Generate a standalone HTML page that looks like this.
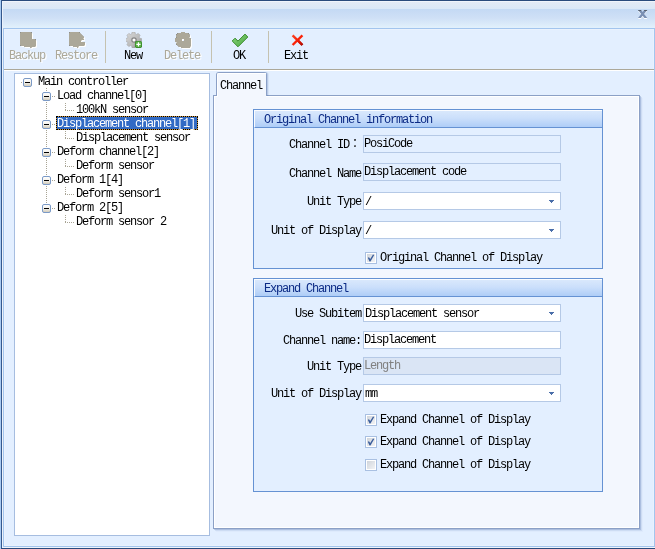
<!DOCTYPE html>
<html lang="en"><head><meta charset="utf-8"><title>Channel</title>
<style>
html,body{margin:0;padding:0}
body{width:655px;height:549px;position:relative;overflow:hidden;background:#e3efff;font:12px/12px "Liberation Mono","Noto Sans CJK SC",monospace;color:#000}
div,span,svg{position:absolute;box-sizing:border-box}
.t{white-space:pre;font:12px/12px "Liberation Mono","Noto Sans CJK SC",monospace;letter-spacing:-1.2px;will-change:transform}
.dis{color:#aca899;text-shadow:1.2px 1px 0 #fff}
.hd{color:#0b2a85}
.wh{color:#fff}
.gr{color:#808080}
.inp{border:1px solid #b5c9e6;height:18px;left:363px;width:198px}
.w{background:#fff}
.ro{background:#e3efff}
.dd{background:#dae5f5}
.grp{border:1px solid #6592d3;background:#e3efff;left:253px;width:350px}
.gh{left:0;top:0;width:348px;height:18px;border-bottom:1px solid #6592d3;border-top:1px solid #fafcff;border-left:1px solid #fafcff;background:linear-gradient(#d9e8fc,#cbdffb 45%,#aecdf7)}
.cb{width:12px;height:12px;border:1px solid #a9c0e2;background:#fff;left:365px}
.cb i{position:absolute;left:1px;top:1px;width:8px;height:8px;background:linear-gradient(135deg,#cfd4db,#f2f3f5)}
.sep{width:1px;top:31px;height:32px;background:#c5c2b0}
</style></head><body>

<div style="left:1px;top:0;width:654px;height:29px;background:linear-gradient(#2a4a7c 0,#2a4a7c 1px,#f0f4fb 1px,#f0f4fb 2px,#e3eaf5 2px,#dae7f7 9px,#c4d9f4 9px,#cfe0f6 18px,#e2f1fc 28px,#a3c5ee 28px)"></div>
<div style="left:0;top:0;width:1px;height:549px;background:#a8caf2"></div>
<div style="left:1px;top:0;width:1px;height:549px;background:#34578c"></div>
<div style="left:2px;top:1px;width:1px;height:547px;background:#ecf2fb"></div>
<div style="left:1px;top:548px;width:654px;height:1px;background:#2a4a7c"></div>
<div style="left:2px;top:547px;width:653px;height:1px;background:#eef4fc"></div>
<div style="left:3px;top:28px;width:652px;height:519px;border:1px solid #a3c5ee;background:#e3efff"></div>
<div style="left:4px;top:29px;width:650px;height:517px;border:1px solid #eaf2fd"></div>
<svg style="left:636px;top:8px" width="14" height="13" viewBox="0 0 14 13"><path d="M2 3h2.900l1.750 2.100 1.750-2.100h2.900l-3.200 3.800 3.200 4.200h-2.900l-1.750-2.400-1.750 2.400h-2.900l3.200-4.200z" fill="#fff"/><path d="M2 2h2.900l1.750 2.100 1.750-2.100h2.900l-3.200 3.900 3.200 4.100h-2.900l-1.750-2.300-1.750 2.300h-2.900l3.200-4.100z" fill="#7a8fb3"/><path d="M2 2h2.900l.7.900h-2.900zM8.400 2h2.900l-.7.900h-2.900z" fill="#59616e"/></svg>
<div style="left:4px;top:69px;width:650px;height:1px;background:#aca899"></div>
<div style="left:4px;top:70px;width:650px;height:1px;background:#fff"></div>
<div class="sep" style="left:105px"></div><div class="sep" style="left:211px"></div><div class="sep" style="left:268px"></div>
<svg style="left:19px;top:31px" width="20" height="19" viewBox="0 0 20 19"><g id="bk"><path d="M2 1h10l1 1v6h3l1 1v6l-1 1h-3l-.5 1h-1.500v-1h-6v-1h-3l-1-1v-12z"/></g><use href="#bk" fill="#fff" x="1" y="1"/><use href="#bk" fill="#aca899"/></svg>
<svg style="left:68px;top:31px" width="20" height="19" viewBox="0 0 20 19"><g id="rs"><path d="M2 1h9l5 5v1h-1l1 1v1h-2l-1 1v1h4v3l-1 1h-5l-.5 1-.5 1h-1v-1h-4v-1h-3l-1-1v-12z"/></g><use href="#rs" fill="#fff" x="1" y="1"/><use href="#rs" fill="#aca899"/></svg>
<svg style="left:126px;top:32px" width="16" height="16" viewBox="0 0 17 17"><defs><linearGradient id="gg" x1="0" y1="0" x2="1" y2="1"><stop offset="0" stop-color="#dcdcdc"/><stop offset=".6" stop-color="#b9b9b9"/><stop offset="1" stop-color="#8c8c8c"/></linearGradient></defs><path d="M6.500 0h3l.4 2 1.300.6 1.800-1.100 2 2-1.100 1.800.6 1.300 2 .4v3l-2 .4-.6 1.300 1.100 1.800-2 2-1.800-1.100-1.300.6-.4 2h-3l-.4-2-1.300-.6-1.800 1.100-2-2 1.100-1.800-.6-1.300-2-.4v-3l2-.4.6-1.300-1.100-1.800 2-2 1.800 1.100 1.300-.6z" fill="url(#gg)" stroke="#a3a3a3" stroke-width=".6"/><circle cx="8.500" cy="8.500" r="2.300" fill="#fff" stroke="#858585" stroke-width="1.300"/><rect x="9.500" y="9.500" width="7.500" height="7.500" rx="1.800" fill="#2f7f22"/><rect x="10.200" y="10.200" width="6.100" height="6.100" rx="1.300" fill="#5bb245"/><path d="M12.600 11h1.300v1.600h1.600v1.300h-1.600v1.600h-1.300v-1.600h-1.600v-1.300h1.600z" fill="#fff"/></svg>
<svg style="left:174px;top:31px" width="20" height="20" viewBox="0 0 20 20"><g id="dl"><path d="M7 1h4v1h3l2 2v2l-1 1h2v8l-1 1.500v.5h-9v-1h-2l-3-3v-1l1-1h-2v-4h2l-1-1v-2l2-2h3zM8 8v2h2v-2z" fill-rule="evenodd"/></g><use href="#dl" fill="#fff" x="1" y="1"/><use href="#dl" fill="#aca899"/></svg>
<svg style="left:231px;top:33px" width="18" height="15" viewBox="0 0 18 15"><defs><linearGradient id="ck" x1="0" y1="0" x2="1" y2="1"><stop offset="0" stop-color="#8ad67e"/><stop offset="1" stop-color="#4aa640"/></linearGradient></defs><path d="M1.200 8l2.800-2.800 3 2.900 7-7 2.800 2.900-9.800 9.800z" fill="url(#ck)" stroke="#3a8c2e" stroke-width="1" stroke-linejoin="round"/></svg>
<svg style="left:290px;top:33px" width="16" height="15" viewBox="0 0 16 15"><defs><linearGradient id="rx" gradientUnits="userSpaceOnUse" x1="2" y1="2" x2="13" y2="13"><stop offset="0" stop-color="#ff4422"/><stop offset=".55" stop-color="#f01c06"/><stop offset="1" stop-color="#a00c04"/></linearGradient></defs><path d="M2.600 2.300l9.800 9.700" stroke="url(#rx)" stroke-width="2.400" fill="none"/><path d="M12.400 2.300l-9.800 9.700" stroke="#fa2208" stroke-width="2.400" fill="none"/><path d="M7.500 7.150l4.900 4.850" stroke="url(#rx)" stroke-width="2.400" fill="none"/></svg>
<span class="t dis" style="left:9px;top:50px">Backup</span>
<span class="t dis" style="left:55px;top:50px">Restore</span>
<span class="t" style="left:124px;top:50px">New</span>
<span class="t dis" style="left:164px;top:50px">Delete</span>
<span class="t" style="left:233px;top:50px">OK</span>
<span class="t" style="left:284px;top:50px">Exit</span>
<div style="left:14px;top:73px;width:196px;height:463px;border:1px solid #a6bde0;background:#fff"></div>
<div style="left:56px;top:116px;width:142px;height:14px;background:#316ac5;border:1px solid #ce953a"></div>
<div style="left:56px;top:116px;width:142px;height:14px;border:1px dotted #000"></div>
<svg style="left:0;top:0" width="220" height="240" viewBox="0 0 220 240" shape-rendering="crispEdges"><defs><linearGradient id="eb" x1="0" y1="0" x2="0" y2="1"><stop offset="0" stop-color="#fff"/><stop offset=".5" stop-color="#f4f2ec"/><stop offset="1" stop-color="#cdc6b4"/></linearGradient></defs><g stroke="#a8a494" stroke-width="1" stroke-dasharray="1 1" fill="none"><path d="M46.500 88v116"/><path d="M52 96.5h4"/><path d="M65.500 103v8"/><path d="M65 110.5h10"/><path d="M52 124.5h4"/><path d="M65.500 131v8"/><path d="M65 138.5h10"/><path d="M52 152.5h4"/><path d="M65.500 159v8"/><path d="M65 166.5h10"/><path d="M52 180.5h4"/><path d="M65.500 187v8"/><path d="M65 194.5h10"/><path d="M52 208.5h4"/><path d="M65.500 215v8"/><path d="M65 222.5h10"/><path d="M21 82.500h2"/></g><rect x="23.5" y="78.5" width="8" height="8" rx="1.500" fill="url(#eb)" stroke="#7b9ac7" shape-rendering="auto"/><path d="M25 82.5h5" stroke="#000"/><rect x="42.5" y="92.5" width="8" height="8" rx="1.500" fill="url(#eb)" stroke="#7b9ac7" shape-rendering="auto"/><path d="M44 96.5h5" stroke="#000"/><rect x="42.5" y="120.5" width="8" height="8" rx="1.500" fill="url(#eb)" stroke="#7b9ac7" shape-rendering="auto"/><path d="M44 124.5h5" stroke="#000"/><rect x="42.5" y="148.5" width="8" height="8" rx="1.500" fill="url(#eb)" stroke="#7b9ac7" shape-rendering="auto"/><path d="M44 152.5h5" stroke="#000"/><rect x="42.5" y="176.5" width="8" height="8" rx="1.500" fill="url(#eb)" stroke="#7b9ac7" shape-rendering="auto"/><path d="M44 180.5h5" stroke="#000"/><rect x="42.5" y="204.5" width="8" height="8" rx="1.500" fill="url(#eb)" stroke="#7b9ac7" shape-rendering="auto"/><path d="M44 208.5h5" stroke="#000"/></svg>
<span class="t" style="left:38px;top:76px">Main controller</span>
<span class="t" style="left:57px;top:90px">Load channel[0]</span>
<span class="t" style="left:76px;top:104px">100kN sensor</span>
<span class="t wh" style="left:57px;top:118px">Displacement channel[1]</span>
<span class="t" style="left:76px;top:132px">Displacement sensor</span>
<span class="t" style="left:57px;top:146px">Deform channel[2]</span>
<span class="t" style="left:76px;top:160px">Deform sensor</span>
<span class="t" style="left:57px;top:174px">Deform 1[4]</span>
<span class="t" style="left:76px;top:188px">Deform sensor1</span>
<span class="t" style="left:57px;top:202px">Deform 2[5]</span>
<span class="t" style="left:76px;top:216px">Deform sensor 2</span>
<div style="left:213px;top:95px;width:427px;height:434px;border:1px solid #8ba0c6;background:#f3f7fe;box-shadow:1px 1px 0 rgba(95,125,180,.30),2px 2px 0 rgba(95,125,180,.13),3px 3px 0 rgba(95,125,180,.04)"></div>
<div style="left:214px;top:96px;width:425px;height:432px;border:1px solid #fff"></div>
<div style="left:216px;top:72px;width:51px;height:24px;border:1px solid #8ba0c6;border-bottom:0;border-radius:3px 3px 0 0;background:#f3f7fe;box-shadow:1px 0 0 rgba(95,125,180,.25),2px 0 0 rgba(95,125,180,.10)"></div>
<div style="left:217px;top:73px;width:49px;height:24px;border:1px solid #fff;border-right:0;border-bottom:0;border-radius:2px 0 0 0;background:#f3f7fe"></div>
<span class="t" style="left:220px;top:80px">Channel</span>
<div class="grp" style="top:109px;height:160px"><div class="gh"></div></div>
<span class="t hd" style="left:264px;top:114px">Original Channel information</span>
<span class="t" style="left:289px;top:139px">Channel ID<span style="position:static;letter-spacing:0;font-family:'Liberation Mono','Noto Sans CJK JP',monospace">：</span></span>
<span class="t" style="left:289px;top:168px">Channel Name</span>
<span class="t" style="left:307px;top:196px">Unit Type</span>
<span class="t" style="left:271px;top:225px">Unit of Display</span>
<div class="inp ro" style="top:135px"></div><div class="inp ro" style="top:163px"></div><div class="inp w" style="top:192px"></div><div class="inp w" style="top:221px"></div>
<span class="t" style="left:364px;top:138px">PosiCode</span>
<span class="t" style="left:364px;top:166px">Displacement code</span>
<span class="t" style="left:365px;top:196px">/</span>
<span class="t" style="left:365px;top:225px">/</span>
<svg style="left:549px;top:200px" width="5" height="3" viewBox="0 0 5 3" shape-rendering="crispEdges"><path d="M0 0h5v1h-1v1h-1v1h-1v-1h-1v-1h-1z" fill="#4a6ea9"/></svg>
<svg style="left:549px;top:229px" width="5" height="3" viewBox="0 0 5 3" shape-rendering="crispEdges"><path d="M0 0h5v1h-1v1h-1v1h-1v-1h-1v-1h-1z" fill="#4a6ea9"/></svg>
<div class="cb" style="top:252px"><i></i><svg style="left:1px;top:1px" width="8" height="8" viewBox="0 0 8 8"><path d="M.8 3.800l1.200-.5 1.200 1.800 2.800-4.700 1.200.6-3.700 6.500h-1z" fill="#3b5e9c"/></svg></div>
<span class="t" style="left:380px;top:252px">Original Channel of Display</span>
<div class="grp" style="top:278px;height:214px"><div class="gh"></div></div>
<span class="t hd" style="left:264px;top:283px">Expand Channel</span>
<span class="t" style="left:295px;top:308px">Use Subitem</span>
<span class="t" style="left:283px;top:335px">Channel name:</span>
<span class="t" style="left:307px;top:361px">Unit Type</span>
<span class="t" style="left:271px;top:388px">Unit of Display</span>
<div class="inp w" style="top:304px"></div><div class="inp w" style="top:331px"></div><div class="inp dd" style="top:357px"></div><div class="inp w" style="top:384px"></div>
<span class="t" style="left:365px;top:308px">Displacement sensor</span>
<span class="t" style="left:364px;top:334px">Displacement</span>
<span class="t gr" style="left:364px;top:360px">Length</span>
<span class="t" style="left:365px;top:388px">mm</span>
<svg style="left:549px;top:312px" width="5" height="3" viewBox="0 0 5 3" shape-rendering="crispEdges"><path d="M0 0h5v1h-1v1h-1v1h-1v-1h-1v-1h-1z" fill="#4a6ea9"/></svg>
<svg style="left:549px;top:392px" width="5" height="3" viewBox="0 0 5 3" shape-rendering="crispEdges"><path d="M0 0h5v1h-1v1h-1v1h-1v-1h-1v-1h-1z" fill="#4a6ea9"/></svg>
<div class="cb" style="top:414px"><i></i><svg style="left:1px;top:1px" width="8" height="8" viewBox="0 0 8 8"><path d="M.8 3.800l1.200-.5 1.200 1.800 2.800-4.700 1.200.6-3.700 6.500h-1z" fill="#3b5e9c"/></svg></div>
<div class="cb" style="top:436px"><i></i><svg style="left:1px;top:1px" width="8" height="8" viewBox="0 0 8 8"><path d="M.8 3.800l1.200-.5 1.200 1.800 2.800-4.700 1.200.6-3.700 6.500h-1z" fill="#3b5e9c"/></svg></div>
<div class="cb" style="top:459px"><i></i></div>
<span class="t" style="left:380px;top:414px">Expand Channel of Display</span>
<span class="t" style="left:380px;top:436px">Expand Channel of Display</span>
<span class="t" style="left:380px;top:459px">Expand Channel of Display</span>
</body></html>
